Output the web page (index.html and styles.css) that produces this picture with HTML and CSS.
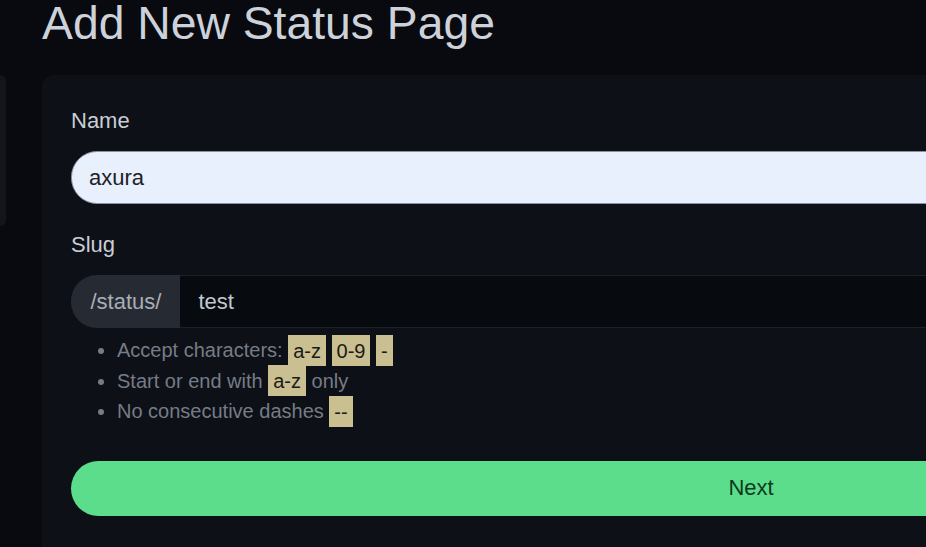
FILE: index.html
```html
<!DOCTYPE html>
<html lang="en">
<head>
  <meta charset="UTF-8">
  <meta name="viewport" content="width=device-width, initial-scale=1.0">
  <title>Add New Status Page</title>
  <link rel="stylesheet" href="styles.css">
</head>
<body>
  <div class="page">
    <h1>Add New Status Page</h1>

    <div class="layout">
      <div class="sidebar"></div>

      <div class="card">
        <div class="form-group">
          <label for="name">Name</label>
          <input type="text" id="name" class="input-name" value="axura">
        </div>

        <div class="form-group">
          <label for="slug">Slug</label>
          <div class="input-group">
            <span class="addon">/status/</span>
            <input type="text" id="slug" class="input-slug" value="test">
          </div>
          <ul class="rules">
            <li>Accept characters: <mark>a-z</mark> <mark>0-9</mark> <mark>-</mark></li>
            <li>Start or end with <mark>a-z</mark> only</li>
            <li>No consecutive dashes <mark>--</mark></li>
          </ul>
        </div>

        <button type="button" class="btn-next">Next</button>
      </div>
    </div>
  </div>
</body>
</html>
```

FILE: styles.css
```css
html, body {
  margin: 0;
  padding: 0;
  overflow: hidden;
  background-color: #080a0f;
}

body {
  font-family: "Liberation Sans", Arial, sans-serif;
  color: #c9ced6;
}

.page {
  width: 1500px;
}

h1 {
  margin: 0 0 28px 42px;
  font-size: 46.3px;
  font-weight: 400;
  line-height: 1.02;
  color: #cdd2da;
}

.layout {
  display: flex;
  gap: 36px;
}

.sidebar {
  width: 6px;
  height: 151px;
  background-color: #12151b;
  border-radius: 0 10px 10px 0;
}

.card {
  width: 1418px;
  height: 520px;
  padding: 29px 29px;
  box-sizing: border-box;
  background-color: #0d1016;
  border-radius: 12px;
}

.form-group {
  margin-bottom: 24px;
}

label {
  display: block;
  font-size: 22px;
  line-height: 33px;
  margin-bottom: 14px;
  color: #c9ced6;
}

input {
  font-family: inherit;
  font-size: 22px;
  box-sizing: border-box;
  outline: none;
}

.input-name {
  width: 100%;
  height: 53px;
  padding: 0 17px;
  border: 1px solid #8a92a2;
  border-radius: 26px;
  background-color: #e8effd;
  color: #1d2025;
}

.input-group {
  display: flex;
  height: 53px;
}

.addon {
  display: flex;
  align-items: center;
  padding: 0 19px 0 19.5px;
  font-size: 22px;
  color: #a9aeb6;
  background-color: #262b33;
  border-radius: 26px 0 0 26px;
}

.input-slug {
  flex: 1;
  height: 53px;
  padding: 0 18px;
  border: 1px solid #1c2027;
  border-left: none;
  background-color: #070a0f;
  color: #c3c7ce;
}

.rules {
  margin: 7px 0 0;
  padding-left: 46px;
  font-size: 20px;
  line-height: 30.5px;
  color: #767c86;
}

mark {
  padding: 4.5px 5px;
  background-color: #cabf90;
  color: #1b1a16;
}

.btn-next {
  display: block;
  width: 100%;
  height: 55px;
  margin-top: 34px;
  border: none;
  border-radius: 28px;
  background-color: #5cdd8b;
  color: #0c3a1c;
  font-family: inherit;
  font-size: 22px;
  cursor: pointer;
}
```
